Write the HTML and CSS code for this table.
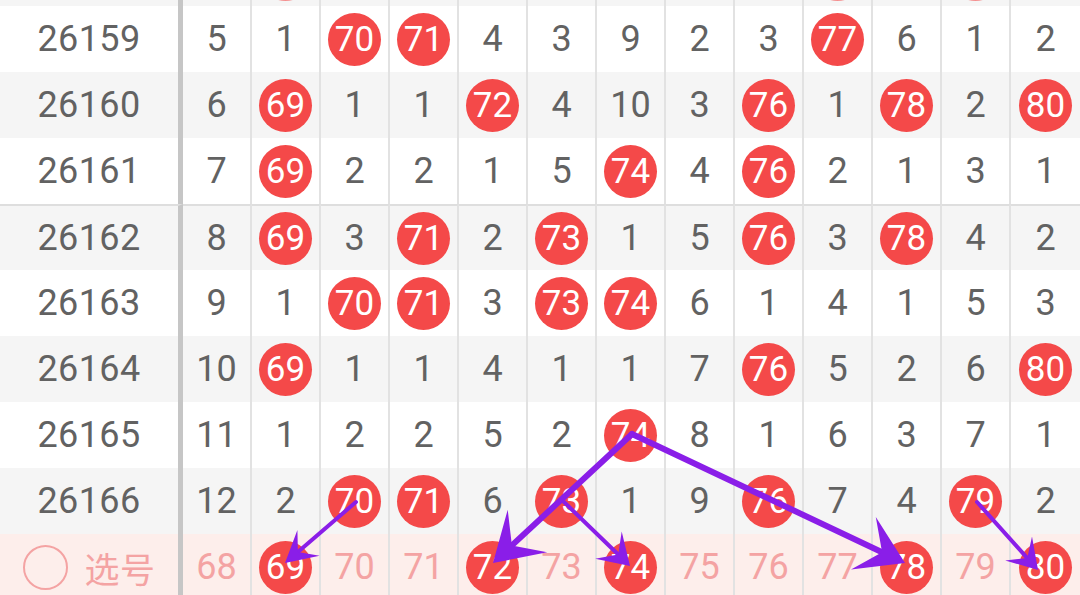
FILE: index.html
```html
<!DOCTYPE html>
<html lang="zh">
<head>
    <meta charset="UTF-8">
    <meta name="viewport" content="width=device-width, initial-scale=1.0">
    <title>走势图</title>
    <link rel="stylesheet" href="styles.css">
</head>
<body>

    <div class="chart">
        <!-- bottom edge of the previous draw, scrolled out of view -->
        <div class="row stub" id="stubRow"></div>

        <div class="rows" id="rows"></div>

        <!-- Pick row -->
        <div class="row pick" id="pickRow">
            <div class="cell issue"><span class="ring"></span><span class="pick-label">选号</span></div>
        </div>

        <!-- Arrows drawn over the chart -->
        <svg class="arrows" id="arrows" width="1080" height="595" viewBox="0 0 1080 595"></svg>
    </div>

    <script>
        // omission counts per column 68..80, values >= 68 are hits
        const history = [
            ["26159", [5, 1, 70, 71, 4, 3, 9, 2, 3, 77, 6, 1, 2]],
            ["26160", [6, 69, 1, 1, 72, 4, 10, 3, 76, 1, 78, 2, 80]],
            ["26161", [7, 69, 2, 2, 1, 5, 74, 4, 76, 2, 1, 3, 1]],
            ["26162", [8, 69, 3, 71, 2, 73, 1, 5, 76, 3, 78, 4, 2]],
            ["26163", [9, 1, 70, 71, 3, 73, 74, 6, 1, 4, 1, 5, 3]],
            ["26164", [10, 69, 1, 1, 4, 1, 1, 7, 76, 5, 2, 6, 80]],
            ["26165", [11, 1, 2, 2, 5, 2, 74, 8, 1, 6, 3, 7, 1]],
            ["26166", [12, 2, 70, 71, 6, 73, 1, 9, 76, 7, 4, 79, 2]]
        ];
        const previousHits = [69, 77, 79];
        const picked = [69, 72, 74, 78, 80];

        function cellHTML(value, isBall) {
            if (isBall) return `<div class="cell"><span class="ball">${value}</span></div>`;
            return `<div class="cell">${value}</div>`;
        }

        const stubRow = document.getElementById("stubRow");
        let stub = `<div class="cell issue"></div>`;
        for (let n = 68; n <= 80; n++) {
            stub += previousHits.includes(n) ? `<div class="cell"><span class="ball"></span></div>` : `<div class="cell"></div>`;
        }
        stubRow.innerHTML = stub;

        const rowsEl = document.getElementById("rows");
        history.forEach((item, index) => {
            let html = `<div class="cell issue">${item[0]}</div>`;
            item[1].forEach(v => html += cellHTML(v, v >= 68));
            let cls = index % 2 === 1 ? "row shade" : "row";
            if (item[0] === "26162") cls += " group";
            rowsEl.innerHTML += `<div class="${cls}">${html}</div>`;
        });

        const pickRow = document.getElementById("pickRow");
        for (let n = 68; n <= 80; n++) {
            pickRow.innerHTML += cellHTML(n, picked.includes(n));
        }

        // arrow: start, tip, head length, head half width, line width
        const arrows = [
            [356, 502, 285, 563, 31, 17, 4],
            [632, 434, 493, 563, 47, 29, 6],
            [632, 434, 905, 563, 46, 29, 6],
            [564, 502, 630, 566, 30, 19, 4],
            [977, 502, 1038, 570, 29, 18, 4]
        ];

        const svg = document.getElementById("arrows");
        arrows.forEach(a => {
            const [x1, y1, x2, y2, h, hw, w] = a;
            const len = Math.hypot(x2 - x1, y2 - y1);
            const dx = (x2 - x1) / len, dy = (y2 - y1) / len;
            const px = -dy, py = dx;
            const bx = x2 - dx * h, by = y2 - dy * h;
            const nx = x2 - dx * h * 0.55, ny = y2 - dy * h * 0.55;
            const pts = [
                [x2, y2],
                [bx + px * hw, by + py * hw],
                [nx, ny],
                [bx - px * hw, by - py * hw]
            ].map(p => p[0].toFixed(1) + "," + p[1].toFixed(1)).join(" ");
            svg.innerHTML += `<line x1="${x1}" y1="${y1}" x2="${nx.toFixed(1)}" y2="${ny.toFixed(1)}" stroke-width="${w}"/>`;
            svg.innerHTML += `<polygon points="${pts}"/>`;
        });
    </script>

</body>
</html>
```

FILE: styles.css
```css
/* Page */
body {
    margin: 0;
    background: #fff;
    font-family: Roboto, "Noto Sans CJK SC", sans-serif;
    overflow: hidden;
}

.chart {
    position: relative;
    width: 1080px;
    height: 595px;
    overflow: hidden;
}

/* Rows */
.row {
    display: grid;
    grid-template-columns: 183px repeat(13, 1fr);
    height: 66px;
    background: #fff;
}

.row.shade {
    background: #f5f5f5;
}

.row.group .cell {
    border-top: 2px solid #dedede;
}

.row.stub {
    height: 6px;
    background: #f5f5f5;
}

.stub .cell {
    align-items: flex-start;
    overflow: hidden;
}

.stub .ball {
    flex-shrink: 0;
    margin-top: -52px;
    opacity: 0.6;
}

.cell {
    box-sizing: border-box;
    display: flex;
    align-items: center;
    justify-content: center;
    border-right: 2px solid #e2e2e2;
    font-size: 36px;
    color: #626262;
}

.cell:last-child {
    border-right: none;
}

.issue {
    border-right: 5px solid #c6c6c6;
    letter-spacing: 0.4px;
}

/* Red hit balls */
.ball {
    display: flex;
    align-items: center;
    justify-content: center;
    width: 53px;
    height: 53px;
    border-radius: 50%;
    background: #f44949;
    color: #fff;
    font-size: 35px;
}

/* Pick row */
.pick {
    background: #fdeeeb;
}

.pick .cell {
    color: #f4a3a3;
}

.pick .issue {
    gap: 17px;
}

.ring {
    box-sizing: border-box;
    width: 45px;
    height: 45px;
    border: 2px solid #f4a3a3;
    border-radius: 50%;
}

.pick-label {
    font-family: "Noto Sans CJK SC", sans-serif;
    font-size: 35px;
}

/* Arrow overlay */
.arrows {
    position: absolute;
    top: 0;
    left: 0;
    pointer-events: none;
}

.arrows line {
    stroke: #8a1ee8;
    stroke-linecap: round;
}

.arrows polygon {
    fill: #8a1ee8;
}
```
